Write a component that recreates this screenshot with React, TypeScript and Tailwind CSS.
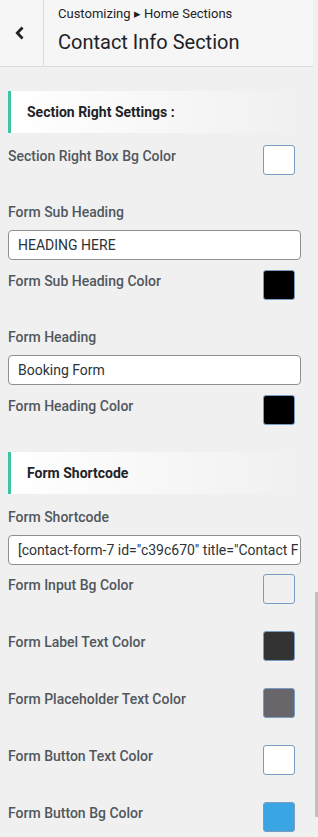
import type { ReactNode } from "react";

type Swatch = { label: string; color: string };

function SectionTitle({ children, className }: { children: ReactNode; className?: string }) {
  return (
    <div
      className={`flex h-[42px] items-center border-l-[3px] border-[#3fc3a5] bg-gradient-to-r from-white to-[#f0f0f0] pl-4 text-[14px] font-bold text-[#1d2327] ${className ?? ""}`}
    >
      {children}
    </div>
  );
}

function ColorRow({ label, color, className }: Swatch & { className?: string }) {
  return (
    <div className={`flex h-[30px] items-start justify-between pr-[6px] ${className ?? ""}`}>
      <span className="pt-px text-[14px] font-medium leading-5 text-[#50575e]">{label}</span>
      <span
        className="h-[30px] w-[32px] rounded-[3px] border border-[#7a9cc2]"
        style={{ backgroundColor: color }}
      />
    </div>
  );
}

function TextField({ label, value, className }: { label: string; value: string; className?: string }) {
  return (
    <div className={className}>
      <div className="h-5 text-[14px] font-medium leading-5 text-[#50575e]">{label}</div>
      <input
        readOnly
        value={value}
        className="mt-2 block h-[30px] w-full rounded-[4px] border border-[#8c8f94] bg-white pl-[9px] pr-[2px] text-[14px] text-[#2c3338] outline-none"
      />
    </div>
  );
}

const bottomSwatches: Swatch[] = [
  { label: "Form Label Text Color", color: "#333333" },
  { label: "Form Placeholder Text Color", color: "#68666b" },
  { label: "Form Button Text Color", color: "#ffffff" },
  { label: "Form Button Bg Color", color: "#3aa5e3" },
];

export default function App() {
  return (
    <div
      className="relative h-[837px] w-[318px] overflow-hidden bg-[#f0f0f0]"
      style={{ fontFamily: "Roboto, 'Liberation Sans', sans-serif" }}
    >
      <header className="mr-[5px] flex h-[67px] border-b border-[#dcdcde] bg-[#f6f6f6]">
        <div className="flex w-[44px] items-center border-r border-[#dcdcde] pl-[15px]">
          <svg width="10" height="14" viewBox="0 0 10 14" fill="none">
            <path d="M7.5 1.5 2.3 7l5.2 5.5" stroke="#1d2327" strokeWidth="2.8" />
          </svg>
        </div>
        <div className="pl-[14px] pt-[5px]">
          <div className="text-[13px] leading-[18px] text-[#1d2327]">Customizing ▸ Home Sections</div>
          <div className="mt-[6px] text-[20px] leading-[26px] text-[#1d2327]">Contact Info Section</div>
        </div>
      </header>

      <div className="pl-2 pr-[17px]">
        <SectionTitle className="mt-6">Section Right Settings :</SectionTitle>
        <ColorRow className="mt-3" label="Section Right Box Bg Color" color="#ffffff" />

        <TextField className="mt-[27px]" label="Form Sub Heading" value="HEADING HERE" />
        <ColorRow className="mt-[10px]" label="Form Sub Heading Color" color="#000000" />

        <TextField className="mt-[27px]" label="Form Heading" value="Booking Form" />
        <ColorRow className="mt-[10px]" label="Form Heading Color" color="#000000" />

        <SectionTitle className="mt-[27px]">Form Shortcode</SectionTitle>
        <TextField
          className="mt-[13px]"
          label="Form Shortcode"
          value={'[contact-form-7 id="c39c670" title="Contact Form"]'}
        />
        <ColorRow className="mt-[9px]" label="Form Input Bg Color" color="#f0f0f0" />

        {bottomSwatches.map((s) => (
          <ColorRow key={s.label} className="mt-[27px]" label={s.label} color={s.color} />
        ))}
      </div>

      <div className="absolute right-0 top-[592px] h-[225px] w-[3px] bg-[#c1c1c1]" />
    </div>
  );
}
